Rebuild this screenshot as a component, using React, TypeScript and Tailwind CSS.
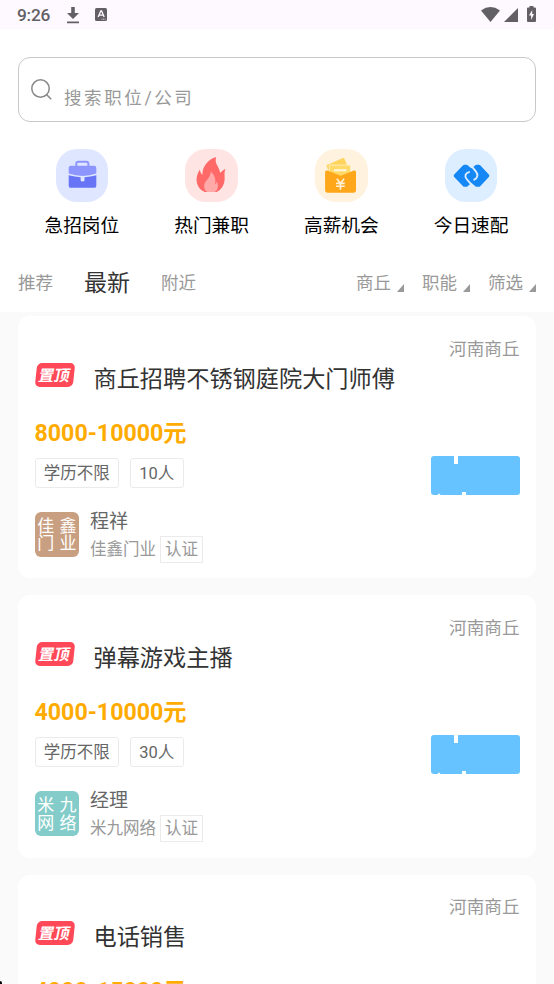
import type { ReactNode } from "react";

interface Job {
  title: string;
  salary: string;
  count: string;
  contact: string;
  company: string;
  avatar: string[];
  avatarColor: string;
}

const jobs: Job[] = [
  {
    title: "商丘招聘不锈钢庭院大门师傅",
    salary: "8000-10000元",
    count: "10人",
    contact: "程祥",
    company: "佳鑫门业",
    avatar: ["佳", "鑫", "门", "业"],
    avatarColor: "bg-[#c99f82]",
  },
  {
    title: "弹幕游戏主播",
    salary: "4000-10000元",
    count: "30人",
    contact: "经理",
    company: "米九网络",
    avatar: ["米", "九", "网", "络"],
    avatarColor: "bg-[#84ccc9]",
  },
];

const categories: { label: string; bg: string; icon: ReactNode }[] = [
  { label: "急招岗位", bg: "bg-[#dfe6ff]", icon: <BriefcaseIcon /> },
  { label: "热门兼职", bg: "bg-[#ffe4e4]", icon: <FlameIcon /> },
  { label: "高薪机会", bg: "bg-[#fff3e0]", icon: <WalletIcon /> },
  { label: "今日速配", bg: "bg-[#dceeff]", icon: <MatchIcon /> },
];

const filters = ["商丘", "职能", "筛选"];

function BriefcaseIcon() {
  return (
    <svg viewBox="0 0 53 53" className="size-full">
      <path d="M20.500 18v-3.200a2 2 0 0 1 2-2h8.200a2 2 0 0 1 2 2V18" fill="none" stroke="#8d96ff" strokeWidth="2" />
      <path d="M15 17h23.500a2.200 2.200 0 0 1 2.200 2.200v5.600Q27 29.500 12.800 24.800v-5.600A2.200 2.200 0 0 1 15 17Z" fill="#8d96ff" />
      <path d="M12.800 26.500Q19 28.300 25 28.400v3.200a1 1 0 0 0 1 1h1.600a1 1 0 0 0 1-1v-3.200Q35 28.300 40.700 26.500V37a2.200 2.200 0 0 1-2.200 2.200H15a2.200 2.200 0 0 1-2.200-2.200Z" fill="#6674f5" />
      <path d="M25 28.400h3.600v3.200a1 1 0 0 1-1 1H26a1 1 0 0 1-1-1Z" fill="#dfe6ff" />
    </svg>
  );
}

function FlameIcon() {
  return (
    <svg viewBox="0 0 53 53" className="size-full">
      <path d="M20 43.500C14.500 41 11.700 36.500 11.700 30.500c0-3.800 1.700-7 3.400-9.700.2 2.400.9 4.200 2.500 5.200-.2-8 5.600-15.500 14-17.800-2.600 5.900 2.900 9.800 3.900 15.700 1.700-1.200 3-2.900 5.300-3.700-1.500 3.800-.6 6.500-.8 10.400-.3 6-3.400 10.700-8 12.900Z" fill="#ff6968" />
      <path d="M22.500 43.500c-4.200-3.200-4-8-1-11.500 2.300-2.700 4.600-5.300 4.500-9 4 3.300 5.300 7.300 4.400 12.500 1.100-.6 1.600-1.500 1.700-2.700 2 4.200 1.400 8.100-2.100 10.700Z" fill="#ffa9a9" />
    </svg>
  );
}

function WalletIcon() {
  return (
    <svg viewBox="0 0 53 53" className="size-full">
      <path d="m11.500 16.500 16.800-7.400a1 1 0 0 1 1.300.6l3 7-18 8Z" fill="#ffd45c" />
      <path d="M14.500 16.200h20a1.300 1.300 0 0 1 1.300 1.300V30h-21.300Z" fill="#ffda69" stroke="#fff3e0" strokeWidth=".7" />
      <path d="M20 21.500h11" stroke="#fff7df" strokeWidth="2" strokeLinecap="round" />
      <path d="M10.200 23.500c0-2 1.800-2 3-1.500l12.700 5 12.700-5c1.300-.5 2.800-.3 2.800 1.500v18a2.700 2.700 0 0 1-2.700 2.700H12.900a2.700 2.700 0 0 1-2.700-2.700Z" fill="#ffa71a" />
      <path d="m22 30 3.700 4.600 3.700-4.600M21.300 34.700h8.800M21.300 37.600h8.800M25.700 34.600v6.600" fill="none" stroke="#fff1d6" strokeWidth="1.700" />
    </svg>
  );
}

function MatchIcon() {
  return (
    <svg viewBox="0 0 53 53" className="size-full">
      <path
        d="M19.500 17.500h2L26.700 22l5.300-4.500h2.300L43 27l-8.700 9.500H32L26.700 32l-5.200 4.500h-2L10.500 27Z"
        fill="#1688f5"
        stroke="#1688f5"
        strokeWidth="3.400"
        strokeLinejoin="round"
      />
      <path d="M24.300 23.300c-3.800.9-4.800 4.300-2.500 7l4.700 5.500M27 17.500l4.300 5.300c2.400 3 1.700 6.600-1.800 8.200" fill="none" stroke="#dceeff" strokeWidth="1.900" strokeLinecap="round" />
    </svg>
  );
}

function StatusBar() {
  return (
    <div className="flex h-[29px] shrink-0 items-center justify-between bg-[#fef9ff] pr-[18px] pl-[17px] text-[#626064]">
      <div className="flex items-center">
        <span className="w-[50px] pt-[2px] text-[17.300px] leading-[29px] font-medium tracking-[-0.200px]">9:26</span>
        <svg viewBox="0 0 12 17" className="mt-[1px] h-[17px] w-3 fill-current">
          <path d="M4.200 0h3.600v6H12l-6 6-6-6h4.200ZM0 14.500h12v1.700H0Z" />
        </svg>
        <svg viewBox="0 0 12 13" className="ml-[15.500px] h-[13px] w-3">
          <rect width="12" height="13" rx="1.500" className="fill-current" />
          <path d="m3.200 9 2.600-6h.8l2.600 6M4.300 7.200h3.800" fill="none" stroke="#fef9ff" strokeWidth="1.300" />
          <path d="M6.500 11.200h4" stroke="#fef9ff" strokeWidth=".8" strokeDasharray="1 .6" />
        </svg>
      </div>
      <div className="flex items-center">
        <svg viewBox="0 0 19 15" className="h-[15px] w-[19px] fill-current">
          <path d="M0 3.500Q9.500-3.300 19 3.500L9.500 15Z" />
        </svg>
        <svg viewBox="0 0 14 14" className="mt-[1px] ml-1 h-[14px] w-[14px] fill-current">
          <path d="M14 0v14H0Z" />
        </svg>
        <svg viewBox="0 0 9 16" className="mb-[1px] ml-[9px] h-4 w-[9px]">
          <path d="M2.500 0h4v1.600H8q1 0 1 1V15q0 1-1 1H1q-1 0-1-1V2.600q0-1 1-1h1.500Z" className="fill-current" />
          <path d="M5.200 4 2 9.500h2.100V14L7 8H5.200Z" fill="#fef9ff" />
        </svg>
      </div>
    </div>
  );
}

function PinnedBadge() {
  return (
    <span className="flex h-6 w-[38px] -skew-x-6 items-center justify-center rounded-[5px] bg-[#ff4858] pt-[2px] text-[15.500px] leading-[22px] font-bold text-white">
      <span className="-skew-x-6">置顶</span>
    </span>
  );
}

// Blue action ticket with small notches along its top and bottom edges
function Ticket() {
  return (
    <svg viewBox="0 0 89 39" className="h-[39px] w-[89px]">
      <rect width="89" height="39" rx="3" fill="#66c3ff" />
      <path d="M23 0h4v8h-4ZM31 36h4v3h-4ZM6.500 39q1.500-3 3 0Z" fill="#fff" />
    </svg>
  );
}

function JobHeading({ title, salary }: { title: string; salary: string }) {
  return (
    <>
      <div className="pr-[0.500px] text-right text-[17.600px] leading-6 text-[#999]">河南商丘</div>
      <div className="flex h-9 items-center">
        <div className="ml-[1px] pb-[8px]">
          <PinnedBadge />
        </div>
        <h2 className="ml-[20px] text-[23.200px] leading-[34px] text-[#333]">{title}</h2>
      </div>
      <div className="mt-[19px] text-[23.200px] leading-[34px] font-bold text-[#ffab00]">{salary}</div>
    </>
  );
}

function JobCard({ job }: { job: Job }) {
  return (
    <article className="h-[262.300px] shrink-0 rounded-xl bg-white pt-[21px] pr-4 pl-[16.500px]">
      <JobHeading title={job.title} salary={job.salary} />
      <div className="mt-[6px] flex h-[39px] items-start justify-between">
        <div className="flex gap-[11px] pt-[2px] text-[16.500px] leading-[28px] text-[#666]">
          <span className="flex h-[30px] w-[84.500px] items-center justify-center rounded-[3px] border border-[#ebebeb] pt-[2px]">学历不限</span>
          <span className="flex h-[30px] w-[53.500px] items-center justify-center rounded-[3px] border border-[#ebebeb] pt-[2px]">{job.count}</span>
        </div>
        <Ticket />
      </div>
      <div className="mt-3 flex">
        <div
          className={`mt-[5px] grid size-[44.500px] grid-cols-2 grid-rows-2 justify-items-center gap-x-1 rounded-md px-[2px] py-[5px] text-[17px] leading-[18px] text-white ${job.avatarColor}`}
        >
          {job.avatar.map((char) => (
            <span key={char}>{char}</span>
          ))}
        </div>
        <div className="ml-[11px] pt-[1px]">
          <div className="text-[19px] leading-7 text-[#666]">{job.contact}</div>
          <div className="flex h-[27px] items-center text-[16.500px] text-[#999]">
            <span className="pt-[2px]">{job.company}</span>
            <span className="ml-1 flex h-[27px] w-[43px] items-center justify-center border border-[#ebebeb] pt-[2px]">认证</span>
          </div>
        </div>
      </div>
    </article>
  );
}

export default function App() {
  return (
    <div className="relative flex h-[984px] flex-col overflow-hidden bg-white font-[Roboto,'Noto_Sans_CJK_SC',sans-serif]">
      <StatusBar />
      <header className="h-[283px] shrink-0 px-[18px] pt-7">
        <div className="flex h-[65px] items-center rounded-xl border border-[#c8c8c8] pl-3">
          <svg viewBox="0 0 21 21" className="size-[21px]" fill="none" stroke="#888" strokeWidth="1.500">
            <circle cx="9.500" cy="9.500" r="8.700" />
            <path d="m15.700 15.700 4.500 4.500" />
          </svg>
          <span className="mt-[17px] ml-3 text-[17.500px] leading-6 tracking-[2.600px] text-[#999]">搜索职位/公司</span>
        </div>
        <nav className="mt-[27px] -ml-[1px] grid grid-cols-4">
          {categories.map((item) => (
            <div key={item.label} className="flex flex-col items-center">
              <div className={`size-[52.500px] rounded-[21px] ${item.bg}`}>{item.icon}</div>
              <span className="mt-[10.500px] text-[18.700px] leading-7 text-black">{item.label}</span>
            </div>
          ))}
        </nav>
        <div className="mt-[17px] flex h-[52px] items-center justify-between text-[17.500px] text-[#999]">
          <div className="flex items-center">
            <span>推荐</span>
            <span className="ml-[31px] pt-[3px] text-[23px] text-[#333]">最新</span>
            <span className="ml-[31px]">附近</span>
          </div>
          <div className="flex gap-[18px]">
            {filters.map((filter) => (
              <span key={filter} className="flex items-end">
                {filter}
                <svg viewBox="0 0 7 8" className="mb-1 ml-[6px] h-2 w-[7px] fill-[#999]">
                  <path d="M7 0v8H0Z" />
                </svg>
              </span>
            ))}
          </div>
        </div>
      </header>
      <main className="flex min-h-0 flex-1 flex-col gap-[17px] overflow-hidden bg-[#fafafa] px-[18px] pt-1">
        {jobs.map((job) => (
          <JobCard key={job.title} job={job} />
        ))}
        {/* The last card runs past the bottom of the screen */}
        <article className="h-[262px] shrink-0 rounded-xl bg-white pt-5 pr-4 pl-[16.500px]">
          <JobHeading title="电话销售" salary="4000-15000元" />
        </article>
      </main>
      <span className="absolute bottom-0 left-0 h-[3px] w-[2px] rounded-tr-full bg-black" />
    </div>
  );
}
